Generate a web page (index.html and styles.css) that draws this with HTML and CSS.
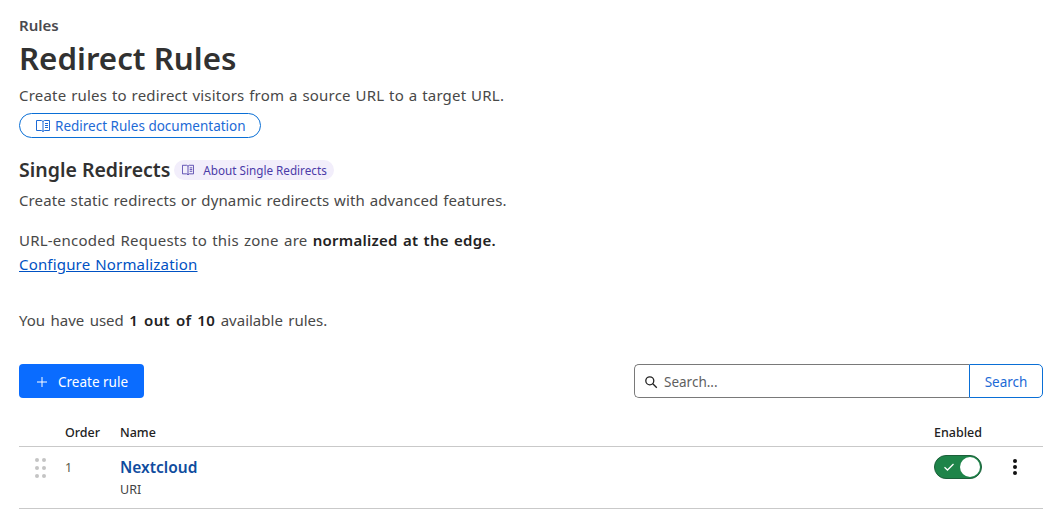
FILE: index.html
```html
<!DOCTYPE html>
<html lang="en">
<head>
  <meta charset="UTF-8" />
  <title>Redirect Rules</title>
  <link rel="stylesheet" href="styles.css">
</head>
<body>
  <div class="crumb">Rules</div>
  <h1>Redirect Rules</h1>
  <p class="lead">Create rules to redirect visitors from a source URL to a target URL.</p>
  <a class="doc-pill" href="#">
    <svg class="book" width="14" height="14" viewBox="0 0 14 14" fill="none" stroke="currentColor" stroke-width="1"><path d="M.5 1.5h5L7 2.5l1.5-1h5v10h-5l-1.5 1-1.5-1h-5z"/><path d="M7 2.5v10M9 4.500h3M9 6.500h3M9 8.500h3"/></svg>
    Redirect Rules documentation
  </a>

  <div class="section-head">
    <h2>Single Redirects</h2>
    <a class="about-tag" href="#">
      <svg class="book" width="12" height="12" viewBox="0 0 14 14" fill="none" stroke="currentColor" stroke-width="1"><path d="M.5 1.5h5L7 2.5l1.5-1h5v10h-5l-1.5 1-1.5-1h-5z"/><path d="M7 2.5v10M9 4.500h3M9 6.500h3M9 8.500h3"/></svg>
      About Single Redirects
    </a>
  </div>
  <p class="sub">Create static redirects or dynamic redirects with advanced features.</p>

  <p class="norm">URL-encoded Requests to this zone are <strong>normalized at the edge.</strong><br><a href="#">Configure Normalization</a></p>

  <p class="usage">You have used <strong>1 out of 10</strong> available rules.</p>

  <div class="toolbar">
    <button class="create-btn">
      <svg width="12" height="12" viewBox="0 0 12 12" stroke="currentColor" stroke-width="1" fill="none"><path d="M6 1v10M1 6h10"/></svg>
      Create rule
    </button>
    <form class="search">
      <label class="search-box">
        <svg width="14" height="14" viewBox="0 0 14 14" fill="none" stroke="#222" stroke-width="1.3"><circle cx="5.8" cy="5.8" r="4"/><path d="M8.8 8.8l4 4"/></svg>
        <input type="text" placeholder="Search...">
      </label>
      <button type="button" class="search-btn">Search</button>
    </form>
  </div>

  <div class="row head-row">
    <div class="col-drag"></div>
    <div class="col-order">Order</div>
    <div class="col-name">Name</div>
    <div class="col-enabled">Enabled</div>
    <div class="col-menu"></div>
  </div>
  <div class="row rule-row">
    <div class="col-drag">
      <div class="grip"><i></i><i></i><i></i><i></i><i></i><i></i></div>
    </div>
    <div class="col-order">1</div>
    <div class="col-name">
      <a class="rule-name" href="#">Nextcloud</a>
      <div class="rule-type">URI</div>
    </div>
    <div class="col-enabled">
      <div class="toggle">
        <svg width="12" height="10" viewBox="0 0 12 10" fill="none" stroke="#fff" stroke-width="1.3"><path d="M1.5 5.2l3 2.8 6-6"/></svg>
        <span class="knob"></span>
      </div>
    </div>
    <div class="col-menu">
      <div class="dots"><i></i><i></i><i></i></div>
    </div>
  </div>
</body>
</html>
```

FILE: styles.css
```css
body {
  margin: 0;
  padding: 15px 13px 0 19px;
  font-family: "Noto Sans", "Noto Sans CJK KR", sans-serif;
  font-size: 15px;
  color: #484848;
  background: #fff;
}

a {
  color: #0051c3;
}

p {
  margin: 0;
}

.crumb {
  font-size: 15px;
  font-weight: 600;
  line-height: 20px;
  color: #4a4a4f;
}

h1 {
  margin: 0;
  font-size: 31.3px;
  line-height: 46px;
  font-weight: 600;
  color: #313131;
}

.lead {
  margin-top: 3px;
  line-height: 23px;
  letter-spacing: .2px;
  word-spacing: .7px;
}

.doc-pill {
  display: inline-flex;
  align-items: center;
  gap: 5px;
  height: 23px;
  margin-top: 6px;
  padding: 0 14px 0 16px;
  border: 1px solid #0a6fd6;
  border-radius: 13px;
  font-size: 13.5px;
  color: #1d6ad6;
  text-decoration: none;
}

.section-head {
  display: flex;
  align-items: center;
  gap: 4px;
  margin-top: 19px;
}

h2 {
  margin: 0;
  font-size: 19.5px;
  line-height: 26px;
  font-weight: 600;
  color: #313131;
}

.about-tag {
  display: inline-flex;
  align-items: center;
  gap: 9px;
  height: 20px;
  padding: 0 7px 0 8px;
  border-radius: 10px;
  background: #f2eefb;
  color: #4b3ba8;
  font-size: 11.7px;
  text-decoration: none;
}

.sub {
  margin-top: 5px;
  line-height: 24px;
  letter-spacing: .12px;
  word-spacing: .75px;
}

.norm {
  margin-top: 16px;
  line-height: 24px;
  letter-spacing: .22px;
  word-spacing: 1.1px;
}

.norm a {
  letter-spacing: .18px;
  word-spacing: .8px;
}

.norm strong {
  letter-spacing: .26px;
}

.norm strong, .usage strong {
  font-weight: 600;
  color: #222;
}

.usage {
  margin-top: 32px;
  line-height: 24px;
  word-spacing: 1.5px;
}

.usage strong {
  letter-spacing: .4px;
}

.toolbar {
  display: flex;
  justify-content: space-between;
  margin-top: 32px;
}

.create-btn {
  display: flex;
  align-items: center;
  gap: 10px;
  width: 125px;
  height: 34px;
  padding: 1px 0 0 17px;
  border: 0;
  border-radius: 4px;
  background: #0a6cff;
  color: #fff;
  font: inherit;
  font-size: 13.5px;
}

.search {
  display: flex;
  width: 409px;
  height: 34px;
}

.search-box {
  flex: 1;
  display: flex;
  align-items: center;
  gap: 6px;
  padding: 1px 0 0 9px;
  border: 1px solid #797979;
  border-right: 0;
  border-radius: 5px 0 0 5px;
}

.search-box input {
  flex: 1;
  min-width: 0;
  border: 0;
  outline: 0;
  padding: 0;
  font: inherit;
  font-size: 13.5px;
}

.search-box input::placeholder {
  color: #5f5f5f;
}

.search-btn {
  width: 74px;
  padding: 1px 0 0;
  border: 1px solid #0a6fd6;
  border-radius: 0 5px 5px 0;
  background: #fff;
  color: #1d6ad6;
  font: inherit;
  font-size: 13.5px;
}

.row {
  display: flex;
  border-bottom: 1px solid #c9c9c9;
}

.head-row {
  align-items: center;
  margin-top: 19px;
  height: 27px;
  padding-top: 2px;
  font-size: 12.5px;
  font-weight: 500;
  color: #222;
}

.rule-row {
  height: 62px;
  padding-top: 8px;
  box-sizing: border-box;
}

.col-drag {
  width: 46px;
}

.col-order {
  width: 55px;
  font-size: 12.5px;
}

.rule-row .col-order {
  padding-top: 4px;
  color: #5c5c48;
}

.col-name {
  flex: 1;
}

.col-enabled {
  width: 48px;
}

.col-menu {
  width: 61px;
  display: flex;
  justify-content: center;
  padding-left: 5px;
  box-sizing: border-box;
}

.grip {
  display: grid;
  grid-template-columns: 4px 4px;
  column-gap: 3px;
  row-gap: 4px;
  margin: 3px 0 0 16px;
}

.grip i {
  width: 4px;
  height: 4px;
  border-radius: 50%;
  background: #c4c4c4;
}

.rule-name {
  display: block;
  margin-top: 2px;
  font-size: 15.5px;
  line-height: 20px;
  font-weight: 600;
  color: #0f4c9e;
  text-decoration: none;
}

.rule-type {
  margin-top: 4px;
  font-size: 12.5px;
  line-height: 18px;
  color: #444;
}

.toggle {
  display: flex;
  align-items: center;
  justify-content: space-between;
  width: 48px;
  height: 24px;
  padding: 0 1px 0 8px;
  box-sizing: border-box;
  border: 1px solid #1c5f3a;
  border-radius: 12px;
  background: #1e8449;
}

.knob {
  width: 20px;
  height: 20px;
  border-radius: 50%;
  background: #fff;
}

.dots {
  display: flex;
  flex-direction: column;
  gap: 2px;
  padding-top: 4px;
}

.dots i {
  width: 4px;
  height: 4px;
  border-radius: 50%;
  background: #111;
}
```
